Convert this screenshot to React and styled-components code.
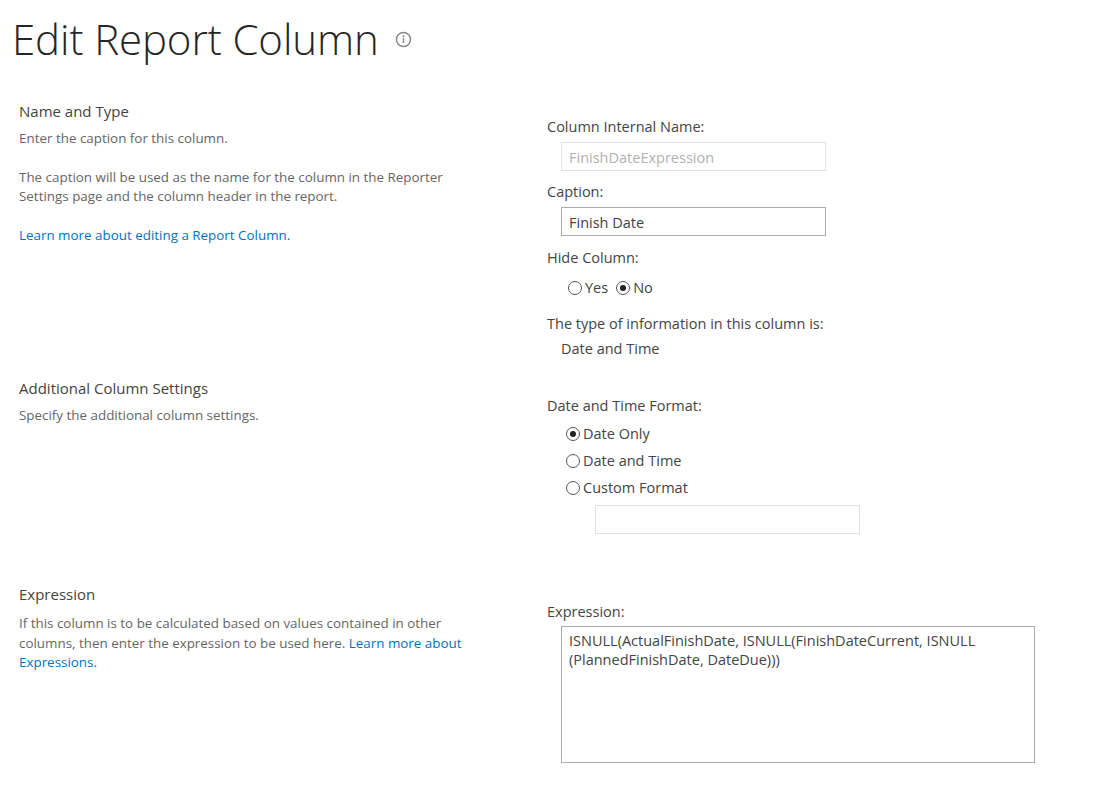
import React from "react";
import styled, { createGlobalStyle } from "styled-components";

const Global = createGlobalStyle`
  body { margin: 0; background: #fff; font-family: "Open Sans", "Noto Sans", sans-serif; color: #333; }
`;

const Page = styled.div`
  padding: 14px 0 0 12px;
  width: 1093px;
`;

const Title = styled.h1`
  margin: 0;
  font-weight: 300;
  font-size: 42px;
  line-height: 50px;
  color: #262626;
  letter-spacing: -0.1px;
  display: flex;
  align-items: center;
  gap: 16px;
`;

const Section = styled.div`
  display: grid;
  grid-template-columns: 535px 1fr;
  padding-top: ${(p) => p.$top}px;
  min-height: ${(p) => p.$h}px;
`;

const Left = styled.div`
  padding-left: 7px;
  width: 455px;
`;

const Heading = styled.div`
  font-size: 15px;
  color: #444;
  margin-bottom: ${(p) => p.$mb ?? 8}px;
`;

const Desc = styled.p`
  margin: 0 0 19px;
  font-size: 13.4px;
  line-height: 19.5px;
  color: #666;
`;

const Link = styled.a`
  color: #0072c6;
  text-decoration: none;
`;

const Right = styled.div`
  padding-top: ${(p) => p.$top || 0}px;
`;

const Label = styled.div`
  font-size: 14.5px;
  color: #444;
  margin-bottom: ${(p) => p.$mb ?? 6}px;
`;

const TextBox = styled.div`
  box-sizing: border-box;
  margin-left: ${(p) => p.$indent ?? 14}px;
  width: ${(p) => p.$w || 265}px;
  height: ${(p) => p.$h || 29}px;
  border: 1px solid ${(p) => (p.$disabled ? "#e1e1e1" : "#ababab")};
  padding: ${(p) => (p.$multi ? "4px 7px" : "5px 7px")};
  font-size: 14.5px;
  line-height: 19px;
  color: ${(p) => (p.$disabled ? "#b1b1b1" : "#444")};
  margin-bottom: ${(p) => p.$mb ?? 6}px;
`;

const RadioRow = styled.div`
  display: flex;
  align-items: center;
  gap: ${(p) => p.$gap || 0}px;
  margin-left: ${(p) => p.$indent}px;
  margin-bottom: ${(p) => p.$mb ?? 0}px;
  font-size: 14.5px;
  color: #444;
`;

const RadioItem = styled.label`
  display: flex;
  align-items: center;
  gap: 3px;
  height: 27px;
`;

const Dot = styled.span`
  width: 14px;
  height: 14px;
  border: 1px solid #555;
  border-radius: 50%;
  box-sizing: border-box;
  display: inline-flex;
  align-items: center;
  justify-content: center;
  &::after {
    content: "";
    width: 6px;
    height: 6px;
    border-radius: 50%;
    background: ${(p) => (p.$on ? "#222" : "transparent")};
  }
`;

const Value = styled.div`
  font-size: 14.5px;
  color: #444;
  margin: 6px 0 0 14px;
`;

const Radio = ({ on, children }) => (
  <RadioItem>
    <Dot $on={on} />
    {children}
  </RadioItem>
);

const InfoIcon = () => (
  <svg width="17" height="17" viewBox="0 0 17 17">
    <circle cx="8.5" cy="8.5" r="7" fill="none" stroke="#888" strokeWidth="1.5" />
    <circle cx="8.5" cy="5.2" r="1" fill="#888" />
    <rect x="7.8" y="7" width="1.4" height="5" fill="#888" />
  </svg>
);

export default function App() {
  return (
    <Page>
      <Global />
      <Title>
        Edit Report Column <InfoIcon />
      </Title>

      <Section $top={37} $h={277}>
        <Left>
          <Heading>Name and Type</Heading>
          <Desc>Enter the caption for this column.</Desc>
          <Desc>
            The caption will be used as the name for the column in the Reporter Settings page and the
            column header in the report.
          </Desc>
          <Desc>
            <Link>Learn more about editing a Report Column.</Link>
          </Desc>
        </Left>
        <Right $top={16}>
          <Label>Column Internal Name:</Label>
          <TextBox $disabled $mb={11}>FinishDateExpression</TextBox>
          <Label>Caption:</Label>
          <TextBox $mb={12}>Finish Date</TextBox>
          <Label $mb={7}>Hide Column:</Label>
          <RadioRow $indent={21} $gap={8} $mb={13}>
            <Radio>Yes</Radio>
            <Radio on>No</Radio>
          </RadioRow>
          <Label $mb={0}>The type of information in this column is:</Label>
          <Value>Date and Time</Value>
        </Right>
      </Section>

      <Section $top={0} $h={206}>
        <Left>
          <Heading>Additional Column Settings</Heading>
          <Desc>Specify the additional column settings.</Desc>
        </Left>
        <Right $top={18}>
          <Label $mb={5}>Date and Time Format:</Label>
          <RadioRow $indent={19}><Radio on>Date Only</Radio></RadioRow>
          <RadioRow $indent={19}><Radio>Date and Time</Radio></RadioRow>
          <RadioRow $indent={19} $mb={4}><Radio>Custom Format</Radio></RadioRow>
          <TextBox $disabled $indent={48} />
        </Right>
      </Section>

      <Section $top={0} $h={160}>
        <Left>
          <Heading $mb={10}>Expression</Heading>
          <Desc>
            If this column is to be calculated based on values contained in other columns, then enter
            the expression to be used here. <Link>Learn more about Expressions.</Link>
          </Desc>
        </Left>
        <Right $top={18}>
          <Label $mb={5}>Expression:</Label>
          <TextBox $multi $w={474} $h={137}>
            ISNULL(ActualFinishDate, ISNULL(FinishDateCurrent, ISNULL (PlannedFinishDate, DateDue)))
          </TextBox>
        </Right>
      </Section>
    </Page>
  );
}
